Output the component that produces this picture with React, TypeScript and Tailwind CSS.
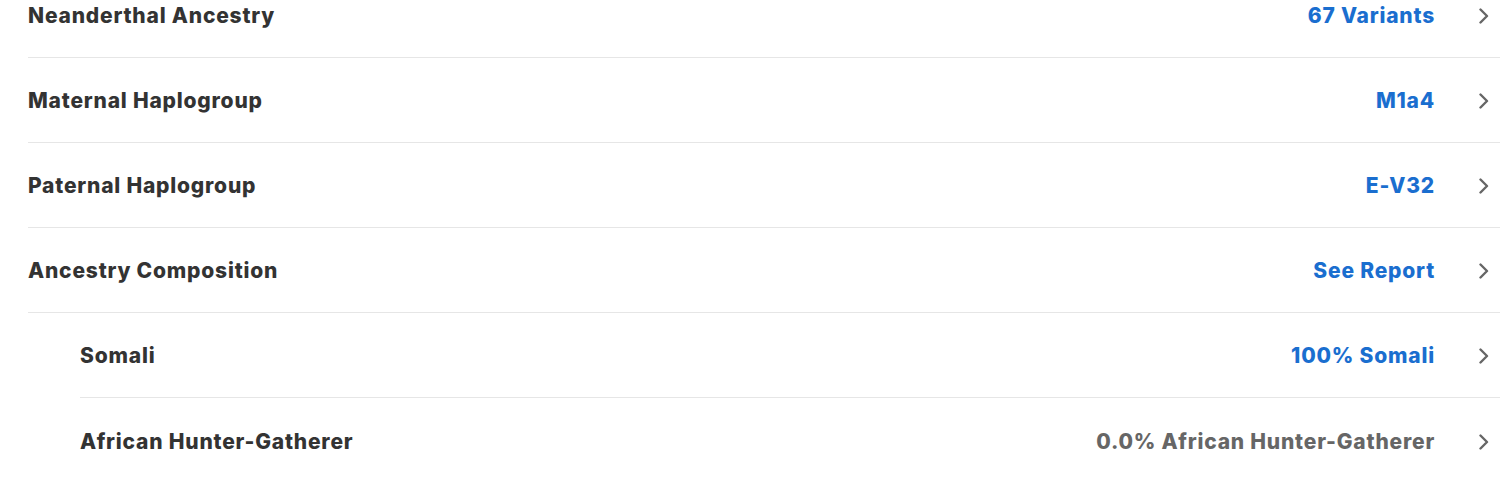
import React from 'react';

type Row = {
  label: string;
  value: string;
  indent?: boolean;
  muted?: boolean;
};

const rows: Row[] = [
  { label: 'Neanderthal Ancestry', value: '67 Variants' },
  { label: 'Maternal Haplogroup', value: 'M1a4' },
  { label: 'Paternal Haplogroup', value: 'E-V32' },
  { label: 'Ancestry Composition', value: 'See Report' },
  { label: 'Somali', value: '100% Somali', indent: true },
  { label: 'African Hunter-Gatherer', value: '0.0% African Hunter-Gatherer', indent: true, muted: true },
];

function Chevron() {
  return (
    <svg width="14" height="16" viewBox="0 0 14 16" fill="none" className="shrink-0">
      <path d="M3.5 1.5 L10 8 L3.5 14.5" stroke="#666666" strokeWidth="2.4" strokeLinecap="round" strokeLinejoin="round" />
    </svg>
  );
}

export default function App() {
  return (
    <div className="w-[1500px] h-[480px] overflow-hidden bg-white font-['Inter',sans-serif]">
      <ul className="-mt-[27px] pl-[28px]">
        {rows.map((r, i) => (
          <li
            key={r.label}
            className={`flex h-[85px] items-center justify-between pt-[2px] pr-[9px] ${
              i < rows.length - 1 ? 'border-b border-[#e6e6e6]' : ''
            } ${r.indent ? 'ml-[52px]' : ''}`}
          >
            <span className="text-[21px] font-extrabold text-[#333333] tracking-[0.8px]">{r.label}</span>
            <div className="flex items-center gap-[42px]">
              <span
                className={`text-[21px] font-extrabold tracking-[0.8px] ${r.muted ? 'text-[#666666]' : 'text-[#1a6ecf]'}`}
              >
                {r.value}
              </span>
              <Chevron />
            </div>
          </li>
        ))}
      </ul>
    </div>
  );
}
